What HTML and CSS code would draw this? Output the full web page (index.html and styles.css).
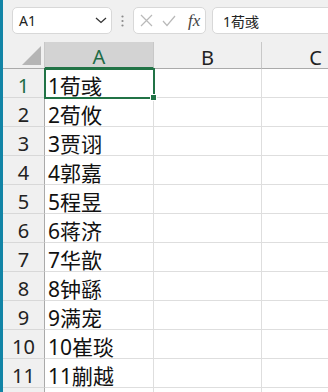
FILE: index.html
```html
<!DOCTYPE html>
<html>
<head>
<meta charset="utf-8">
<link rel="stylesheet" href="styles.css">
</head>
<body>
<div class="app">
  <div class="stripe"></div>
  <div class="main">
    <div class="toolbar">
      <div class="namebox">
        <span class="nb-text">A1</span>
        <svg class="chev" width="12" height="7" viewBox="0 0 12 7"><path d="M1 1 L6 5.5 L11 1" fill="none" stroke="#333" stroke-width="1.3"/></svg>
      </div>
      <div class="sep">
        <svg width="3" height="12" viewBox="0 0 3 12"><circle cx="1.5" cy="1.5" r="1.1" fill="#8a8a8a"/><circle cx="1.5" cy="6" r="1.1" fill="#8a8a8a"/><circle cx="1.5" cy="10.5" r="1.1" fill="#8a8a8a"/></svg>
      </div>
      <div class="fxbox">
        <svg class="ic" width="13" height="13" viewBox="0 0 13 13"><path d="M1 1 L12 12 M12 1 L1 12" stroke="#b9b9b9" stroke-width="1.2" fill="none"/></svg>
        <svg class="ic ok" width="14" height="12" viewBox="0 0 14 12"><path d="M1 6 L5 10.5 L13 1" stroke="#b9b9b9" stroke-width="1.2" fill="none"/></svg>
        <span class="fx">fx</span>
      </div>
      <div class="formula">1荀彧</div>
    </div>
    <div class="sheet">
      <div class="hd corner"><span class="tri"></span></div>
      <div class="hd colh selh">A</div>
      <div class="hd colh">B</div>
      <div class="hd colh">C</div>

      <div class="rh selr">1</div><div class="c sel">1荀彧</div><div class="c"></div><div class="c"></div>
      <div class="rh">2</div><div class="c">2荀攸</div><div class="c"></div><div class="c"></div>
      <div class="rh">3</div><div class="c">3贾诩</div><div class="c"></div><div class="c"></div>
      <div class="rh">4</div><div class="c">4郭嘉</div><div class="c"></div><div class="c"></div>
      <div class="rh">5</div><div class="c">5程昱</div><div class="c"></div><div class="c"></div>
      <div class="rh">6</div><div class="c">6蒋济</div><div class="c"></div><div class="c"></div>
      <div class="rh">7</div><div class="c">7华歆</div><div class="c"></div><div class="c"></div>
      <div class="rh">8</div><div class="c">8钟繇</div><div class="c"></div><div class="c"></div>
      <div class="rh">9</div><div class="c">9满宠</div><div class="c"></div><div class="c"></div>
      <div class="rh">10</div><div class="c">10崔琰</div><div class="c"></div><div class="c"></div>
      <div class="rh">11</div><div class="c">11蒯越</div><div class="c"></div><div class="c"></div>
      <div class="rh"></div><div class="c"></div><div class="c"></div><div class="c"></div>
    </div>
  </div>
</div>
</body>
</html>
```
FILE: styles.css
```css
html, body {
  margin: 0;
  padding: 0;
  width: 328px;
  height: 392px;
  overflow: hidden;
  background: #f0f0f0;
}
.app {
  display: flex;
  height: 392px;
  font-family: "Noto Sans", "Noto Sans CJK SC", sans-serif;
}
.stripe {
  width: 3px;
  flex: none;
  background: #1284a6;
}
.main {
  flex: 1;
  overflow: hidden;
  display: flex;
  flex-direction: column;
}
.toolbar {
  height: 42px;
  flex: none;
  display: flex;
  align-items: flex-start;
  padding-top: 7px;
  box-sizing: border-box;
  background: #f0f0f0;
}
.namebox {
  margin-left: 9px;
  width: 100px;
  height: 27px;
  box-sizing: border-box;
  border: 1px solid #d8d8d8;
  border-radius: 5px;
  background: #fff;
  display: flex;
  align-items: center;
  justify-content: space-between;
  padding: 0 4px 0 6px;
  flex: none;
}
.nb-text {
  font-size: 14px;
  color: #222;
}
.sep {
  width: 21px;
  height: 27px;
  display: flex;
  align-items: center;
  justify-content: center;
  flex: none;
}
.fxbox {
  width: 73px;
  height: 27px;
  box-sizing: border-box;
  border: 1px solid #d8d8d8;
  border-radius: 5px;
  background: #fff;
  display: flex;
  align-items: center;
  padding-left: 6px;
  flex: none;
}
.ic.ok {
  margin-left: 9px;
}
.fx {
  margin-left: 12px;
  font-family: "Liberation Serif", serif;
  font-style: italic;
  font-size: 17px;
  color: #444;
  line-height: 1;
}
.formula {
  margin-left: 6px;
  margin-right: -12px;
  flex: 1;
  height: 27px;
  box-sizing: border-box;
  border: 1px solid #d8d8d8;
  border-radius: 5px;
  background: #fff;
  display: flex;
  align-items: center;
  padding-left: 10px;
  font-size: 14px;
  color: #222;
}
.sheet {
  display: grid;
  grid-template-columns: 42px 109px 108px 108px;
  grid-template-rows: 27px;
  grid-auto-rows: 29px;
  background: #fff;
}
.hd {
  background: #f0f0f0;
  border-right: 1px solid #c8c8c8;
  border-bottom: 1px solid #aaaaaa;
  box-sizing: border-box;
}
.corner {
  display: flex;
  align-items: flex-end;
  justify-content: flex-end;
  padding: 0 3px 3px 0;
}
.tri {
  width: 0;
  height: 0;
  border-style: solid;
  border-width: 0 0 19px 19px;
  border-color: transparent transparent #b5b5b5 transparent;
}
.colh {
  display: flex;
  align-items: center;
  justify-content: center;
  font-size: 20px;
  color: #222;
  padding-top: 4px;
}
.selh {
  background: #d3d3d3;
  color: #1e6b45;
  border-bottom: 2px solid #217346;
}
.rh {
  background: #f0f0f0;
  border-right: 1px solid #aaaaaa;
  border-bottom: 1px solid #d8d8d8;
  box-sizing: border-box;
  display: flex;
  align-items: center;
  justify-content: center;
  font-size: 20px;
  color: #222;
  padding-top: 4px;
}
.selr {
  color: #1e6b45;
}
.c {
  border-right: 1px solid #dedede;
  border-bottom: 1px solid #dedede;
  box-sizing: border-box;
  display: flex;
  align-items: center;
  padding-left: 3px;
  padding-top: 4px;
  font-size: 21px;
  color: #111;
  white-space: nowrap;
}
.sel {
  position: relative;
  z-index: 2;
  outline: 2px solid #217346;
  outline-offset: -1px;
}
.sel::after {
  content: "";
  position: absolute;
  right: -4px;
  bottom: -4px;
  width: 5px;
  height: 5px;
  background: #217346;
  border: 1px solid #fff;
}
```
